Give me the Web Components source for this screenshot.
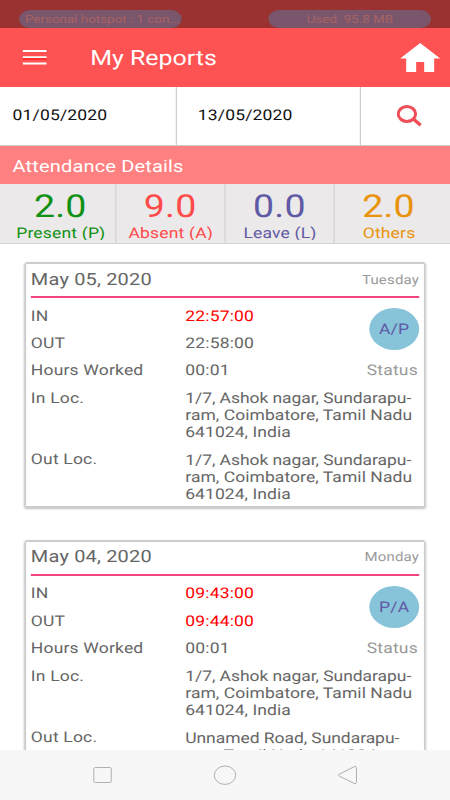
<!DOCTYPE html>
<html lang="en">
<head>
<meta charset="utf-8">
<title>My Reports</title>
<style>
	html, body {
		margin: 0;
		width: 450px;
		height: 800px;
		overflow: hidden;
		background-color: #fff;
	}

	report-card span[slot$="loc"] {
		display: block;
		letter-spacing: .05px;
	}

	report-card span[slot$="loc"]::first-line {
		letter-spacing: -.05px;
	}
</style>
</head>
<body>
<reports-app>
	<status-bar slot="status">
		<span slot="left">Personal hotspot : 1 con...</span>
		<span slot="right">Used&nbsp; 95.8 MB</span>
	</status-bar>
	<app-header slot="header">My Reports</app-header>
	<date-filter from="01/05/2020" to="13/05/2020"></date-filter>
	<section-title>Attendance Details</section-title>
	<stat-row>
		<stat-cell value="2.0" style="color: #119115">Present (P)</stat-cell>
		<stat-cell value="9.0" style="color: #ff4a4a">Absent (A)</stat-cell>
		<stat-cell value="0.0" style="color: #6059a5">Leave (L)</stat-cell>
		<stat-cell value="2.0" style="color: #e9930c">Others</stat-cell>
	</stat-row>
	<report-card date="May 05, 2020" day="Tuesday" status="A/P">
		<span slot="in" style="color: #f00">22:57:00</span>
		<span slot="out">22:58:00</span>
		<span slot="hours">00:01</span>
		<span slot="in-loc">1/7, Ashok nagar, Sundarapu-<br>ram, Coimbatore, Tamil Nadu<br>641024, India</span>
		<span slot="out-loc">1/7, Ashok nagar, Sundarapu-<br>ram, Coimbatore, Tamil Nadu<br>641024, India</span>
	</report-card>
	<report-card date="May 04, 2020" day="Monday" status="P/A">
		<span slot="in" style="color: #f00">09:43:00</span>
		<span slot="out" style="color: #f00">09:44:00</span>
		<span slot="hours">00:01</span>
		<span slot="in-loc">1/7, Ashok nagar, Sundarapu-<br>ram, Coimbatore, Tamil Nadu<br>641024, India</span>
		<span slot="out-loc">Unnamed Road, Sundarapu-<br>ram, Tamil Nadu 641024,<br>India</span>
	</report-card>
	<nav-bar slot="nav"></nav-bar>
</reports-app>

<script>
	const define = (name, html, setup) => {
		const template = document.createElement('template');
		template.innerHTML = html;
		customElements.define(name, class extends HTMLElement {
			constructor() {
				super();
				this
					.attachShadow({ mode: 'open' })
					.appendChild(template.content.cloneNode(true));
				if (setup) setup(this, this.shadowRoot);
			}
		});
	};

	define('reports-app', `
		<style>
			:host {
				display: flex;
				flex-direction: column;
				width: 378.95px;
				height: 800px;
				transform: scaleX(1.1875);
				transform-origin: 0 0;
				overflow: hidden;
				background-color: #fff;
				color: #666;
				font: 14.74px/17.3px Roboto, sans-serif;
				letter-spacing: .15px;
				text-rendering: geometricPrecision;
			}

			.content {
				flex: 1;
				min-height: 0;
				overflow: hidden;
			}
		</style>
		<slot name="status"></slot>
		<slot name="header"></slot>
		<div class="content"><slot></slot></div>
		<slot name="nav"></slot>
	`);

	define('status-bar', `
		<style>
			:host {
				flex: 0 0 28px;
				box-sizing: border-box;
				padding: 10px 16px 0;
				display: flex;
				justify-content: space-between;
				background-color: #993230;
				color: #a86263;
				font-size: 11.4px;
				letter-spacing: -.05px;
			}

			.pill {
				box-sizing: border-box;
				width: 136.6px;
				height: 17.5px;
				padding: 0 5px;
				line-height: 18px;
				border-radius: 9px;
				background-color: #7a566c;
				white-space: nowrap;
			}

			.right {
				text-align: center;
			}
		</style>
		<div class="pill"><slot name="left"></slot></div>
		<div class="pill right"><slot name="right"></slot></div>
	`);

	define('app-header', `
		<style>
			:host {
				flex: 0 0 58.5px;
				display: flex;
				align-items: center;
				background-color: #ff5252;
				color: #fff;
				font-size: 21px;
				letter-spacing: 0;
			}

			.menu {
				width: 20.2px;
				height: 15px;
				margin-left: 19.4px;
			}

			.title {
				flex: 1;
				margin: 4px 0 0 36.4px;
			}

			.home {
				width: 33.7px;
				height: 29px;
				margin-right: 8.1px;
			}
		</style>
		<svg class="menu" viewBox="0 0 24 15" preserveAspectRatio="none">
			<path d="M0 1h24M0 7.2h24M0 13.4h24" stroke="#fff" stroke-width="2"/>
			<path d="M0 8.9h24" stroke="#f00" stroke-width="1"/>
		</svg>
		<div class="title"><slot></slot></div>
		<svg class="home" viewBox="0 0 40 29" preserveAspectRatio="none">
			<path d="M20 0 40 15.5h-6V29H24V19h-8v10H6V15.5H0z" fill="#fff"/>
		</svg>
	`);

	define('date-filter', `
		<style>
			:host {
				display: grid;
				grid-template-columns: 149px 155px 1fr;
				height: 59px;
				border-bottom: 1px solid #ccc;
				box-sizing: border-box;
				color: #111;
			}

			div {
				box-sizing: border-box;
				display: flex;
				align-items: center;
				padding: 1px 0 0 10.5px;
				border-right: 1px solid #ccc;
			}

			div + div {
				padding-left: 17.5px;
			}

			div.search {
				padding-left: 29.7px;
				border-right: 0;
			}

			svg {
				width: 21.9px;
				height: 22px;
			}
		</style>
		<div class="from"></div>
		<div class="to"></div>
		<div class="search">
			<svg viewBox="0 0 26 22" preserveAspectRatio="none">
				<ellipse cx="10.3" cy="9" rx="8.7" ry="7.4" fill="none" stroke="#ef4d58" stroke-width="3"/>
				<path d="M16.5 13.7 24 20.3" stroke="#ef4d58" stroke-width="3.4"/>
			</svg>
		</div>
	`, (host, root) => {
		root.querySelector('.from').textContent = host.getAttribute('from');
		root.querySelector('.to').textContent = host.getAttribute('to');
	});

	define('section-title', `
		<style>
			:host {
				display: block;
				height: 38px;
				padding-left: 10.5px;
				line-height: 42px;
				background-color: #ff8080;
				color: #fff;
				font-size: 16.84px;
			}
		</style>
		<slot></slot>
	`);

	define('stat-row', `
		<style>
			:host {
				display: grid;
				grid-template-columns: 93.4px 91.8px 92.2px 90.5px;
				height: 60px;
				padding: 0 5px;
				box-sizing: border-box;
				border-bottom: 1px solid #d3d3d3;
				background-color: #ebe9e9;
			}

			::slotted(:not(:last-child)) {
				border-right: 1px solid #d3d3d3;
			}
		</style>
		<slot></slot>
	`);

	define('stat-cell', `
		<style>
			:host {
				display: block;
				text-align: center;
			}

			.value {
				padding: 5px 1px 0 0;
				font-size: 31.58px;
				line-height: 36px;
			}

			.label {
				height: 15px;
				overflow: hidden;
			}
		</style>
		<div class="value"></div>
		<div class="label"><slot></slot></div>
	`, (host, root) => {
		root.querySelector('.value').textContent = host.getAttribute('value');
	});

	define('report-card', `
		<style>
			:host {
				display: block;
				box-sizing: border-box;
				width: 337.7px;
				height: 246px;
				margin: 18.8px 0 31.7px 20.6px;
				padding: 0 4.4px;
				border: 2px solid #ccc;
				border-width: 2px 1.5px;
				border-radius: 2px;
				box-shadow: 0 1px 2px rgba(0, 0, 0, .25);
			}

			header {
				display: flex;
				justify-content: space-between;
				align-items: center;
				height: 32px;
				border-bottom: 2px solid #f0437f;
				font-size: 16.84px;
			}

			.day {
				color: #999;
				font-size: 12.63px;
			}

			.body {
				display: flex;
				padding-top: 9.4px;
			}

			.rows {
				flex: 1;
				min-width: 0;
				display: grid;
				grid-template-columns: 130px auto;
				row-gap: 10.1px;
				white-space: nowrap;
			}

			.rows > :nth-child(n+9) {
				margin-top: -.9px;
			}

			.side {
				width: 0;
				display: flex;
				flex-direction: column;
				align-items: flex-end;
				color: #999;
			}

			.badge {
				flex: none;
				width: 42px;
				height: 42px;
				margin: .6px 0 12px;
				border-radius: 50%;
				background-color: #87c3d9;
				color: #6059a5;
				line-height: 42px;
				text-align: center;
			}

			.caption {
				padding-right: 1px;
			}
		</style>
		<header><span class="date"></span><span class="day"></span></header>
		<div class="body">
			<div class="rows">
				<span>IN</span><slot name="in"></slot>
				<span>OUT</span><slot name="out"></slot>
				<span>Hours Worked</span><slot name="hours"></slot>
				<span>In Loc.</span><slot name="in-loc"></slot>
				<span>Out Loc.</span><slot name="out-loc"></slot>
			</div>
			<div class="side">
				<div class="badge"></div>
				<span class="caption">Status</span>
			</div>
		</div>
	`, (host, root) => {
		root.querySelector('.date').textContent = host.getAttribute('date');
		root.querySelector('.day').textContent = host.getAttribute('day');
		root.querySelector('.badge').textContent = host.getAttribute('status');
	});

	define('nav-bar', `
		<style>
			:host {
				flex: 0 0 50.5px;
				display: flex;
				background-color: #f7f7f7;
			}

			svg {
				width: 100%;
				height: 50.5px;
			}

			path, rect, ellipse {
				fill: none;
				stroke: #b0b0b0;
			}
		</style>
		<svg viewBox="0 0 450 50.5" preserveAspectRatio="none">
			<rect x="93.8" y="17.5" width="17.5" height="15" rx="1.5"/>
			<ellipse cx="225" cy="25.2" rx="10.7" ry="9.2"/>
			<path d="M339 24.3 354 16.8q2.5-1 2.5 1v14.5q0 2-2.5 1L339 26q-1.5-.8 0-1.7z"/>
		</svg>
	`);
</script>
</body>
</html>
